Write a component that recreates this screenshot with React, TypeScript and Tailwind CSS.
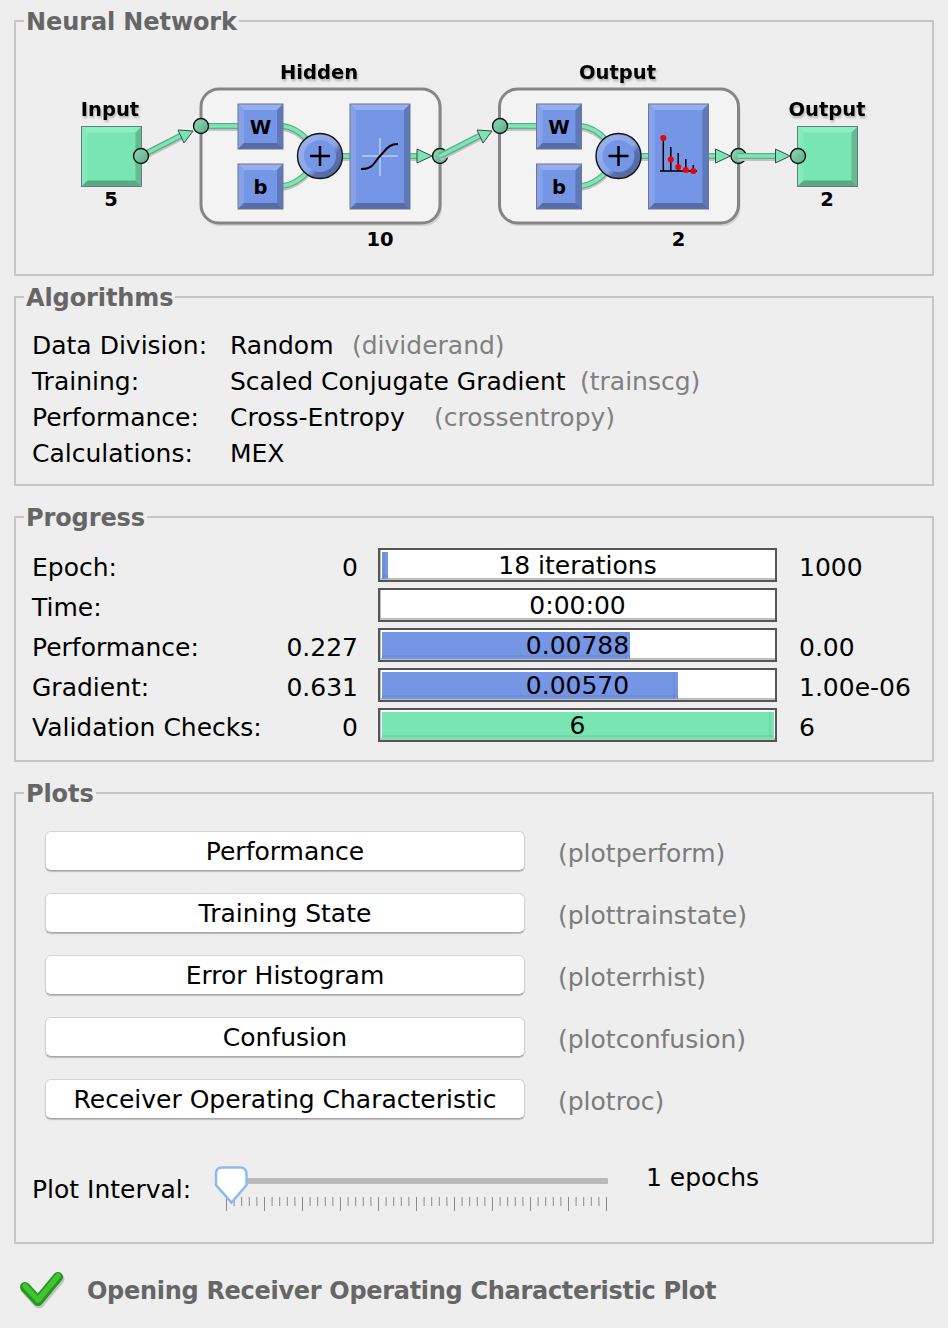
import type { ReactNode } from "react";

const BLUE = { main: "#7595e5", top: "#96aff0", left: "#86a2ea", right: "#5f78ba", bottom: "#566da9" };
const GREEN = { main: "#78e5b2", top: "#8aefc1", left: "#82ebb9", right: "#62bb91", bottom: "#5aa984" };

function Block({ x, y, w, h, bevel = 6, c = BLUE }: { x: number; y: number; w: number; h: number; bevel?: number; c?: typeof BLUE }) {
  const r = x + w;
  const b = y + h;
  const i = bevel;
  return (
    <g>
      <rect x={x} y={y} width={w} height={h} fill={c.main} />
      <polygon points={`${x},${y} ${r},${y} ${r - i},${y + i} ${x + i},${y + i}`} fill={c.top} />
      <polygon points={`${x},${y} ${x + i},${y + i} ${x + i},${b - i} ${x},${b}`} fill={c.left} />
      <polygon points={`${r},${y} ${r},${b} ${r - i},${b - i} ${r - i},${y + i}`} fill={c.right} />
      <polygon points={`${x},${b} ${r},${b} ${r - i},${b - i} ${x + i},${b - i}`} fill={c.bottom} />
      <rect x={x} y={y} width={w} height={h} fill="none" stroke="#6f7787" strokeWidth="1" />
    </g>
  );
}

function Wire({ d }: { d: string }) {
  return (
    <g fill="none">
      <path d={d} stroke="#c2c2c2" strokeWidth="6" transform="translate(0 2)" />
      <path d={d} stroke="#5fae8a" strokeWidth="6" />
      <path d={d} stroke="#7ce7b5" strokeWidth="3.5" />
    </g>
  );
}

function Ring({ x, y }: { x: number; y: number }) {
  return <circle cx={x} cy={y} r="7.5" fill="url(#ring)" stroke="#111" strokeWidth="1.4" />;
}

function Arrow({ points }: { points: string }) {
  return <polygon points={points} fill="#78e5b2" stroke="#3d4a44" strokeWidth="1" />;
}

function Label({ x, y, children, shadow = false }: { x: number; y: number; children: ReactNode; shadow?: boolean }) {
  return (
    <text
      x={x}
      y={y}
      textAnchor="middle"
      className={shadow ? "drop-shadow-[1px_2px_1px_#b0b0b0]" : ""}
      fontFamily="'DejaVu Sans', sans-serif"
      fontWeight="700"
      fontSize="19.5"
      fill="#000"
    >
      {children}
    </text>
  );
}

function Layer({ dx, title, size, children }: { dx: number; title: string; size: string; children: ReactNode }) {
  return (
    <g>
      <Label x={319 + dx} y={79} shadow>{title}</Label>
      <rect x={202 + dx} y={91} width={240} height={135} rx="18" fill="#bbb" opacity="0.55" />
      <rect x={201 + dx} y={89} width={239} height={134} rx="18" fill="#f3f3f3" stroke="#858585" strokeWidth="3" />
      <Wire d={`M${201 + dx} 126H${238 + dx}`} />
      <Wire d={`M${283 + dx} 126C${293 + dx} 127 ${300 + dx} 132 ${308 + dx} 140`} />
      <Wire d={`M${283 + dx} 186C${293 + dx} 185 ${300 + dx} 180 ${308 + dx} 172`} />
      <Wire d={`M${340 + dx} 156H${350 + dx}`} />
      <Wire d={`M${410 + dx} 156H${420 + dx}`} />
      <Block x={238 + dx} y={104} w={45} h={45} />
      <Block x={238 + dx} y={164} w={45} h={45} />
      <Label x={260.5 + dx} y={134}>W</Label>
      <Label x={260.5 + dx} y={194}>b</Label>
      <circle cx={320 + dx} cy={156} r="22.5" fill="url(#sum)" stroke="#111" strokeWidth="1.4" />
      <circle cx={320 + dx} cy={156} r="16" fill="#7595e5" />
      <path d={`M${310 + dx} 156H${330 + dx}M${320 + dx} 146V166`} stroke="#000" strokeWidth="2.5" />
      <Block x={350 + dx} y={104} w={60} h={105} />
      {children}
      <Arrow points={`${417 + dx},149 ${432 + dx},156 ${417 + dx},163`} />
      <Ring x={440 + dx} y={156} />
      <Label x={380 + dx} y={246}>{size}</Label>
    </g>
  );
}

function NetworkDiagram() {
  const stems = [
    [663.3, 138, 138],
    [670.8, 147, 159.5],
    [678.2, 153, 167],
    [685.8, 159, 170],
    [693.3, 165, 171],
  ];
  return (
    <svg viewBox="16 35 916 238" className="block h-[238px] w-[916px]">
      <defs>
        <linearGradient id="ring" x1="0" y1="0" x2="1" y2="1">
          <stop offset="0" stopColor="#8fdcb8" />
          <stop offset="1" stopColor="#5aa984" />
        </linearGradient>
        <linearGradient id="sum" x1="0" y1="0" x2="1" y2="1">
          <stop offset="0" stopColor="#9db4f0" />
          <stop offset="0.55" stopColor="#8aa4ea" />
          <stop offset="0.65" stopColor="#5a70ab" />
          <stop offset="1" stopColor="#4f659f" />
        </linearGradient>
      </defs>

      <Label x={110} y={116} shadow>Input</Label>
      <Block x={81.5} y={126.5} w={60} h={60} c={GREEN} />
      <Label x={111} y={206}>5</Label>
      <Wire d="M141 156L186 133" />
      <Arrow points="178,130 193,131 184,143" />
      <Ring x={141} y={156} />

      <Layer dx={0} title="Hidden" size="10">
        <path d="M380 138V176M362 156H398" stroke="#dfe6fa" strokeWidth="1" />
        <path d="M361 169C374 169 374 162 380 156C386 150 388 144 398 144" fill="none" stroke="#000" strokeWidth="2" />
      </Layer>
      <Ring x={201} y={126} />

      <Wire d="M440 156L485 133" />
      <Arrow points="477,130 492,131 483,143" />

      <Layer dx={298.5} title="Output" size="2">
        <path d="M660 171H697" stroke="#000" strokeWidth="1.5" />
        {stems.map(([x, t, d]) => (
          <g key={x}>
            <path d={`M${x} ${t}V171`} stroke="#000" strokeWidth="1.5" />
            <circle cx={x} cy={d} r="3" fill="#f00000" />
          </g>
        ))}
      </Layer>
      <Ring x={500} y={126} />

      <Label x={827} y={116} shadow>Output</Label>
      <Block x={797.5} y={126.5} w={60} h={60} c={GREEN} />
      <Label x={827} y={206}>2</Label>
      <Wire d="M738 156H776" />
      <Arrow points="775.5,149 790,156 775.5,163" />
      <Ring x={798} y={156} />
    </svg>
  );
}

function Panel({ title, className, children }: { title: string; className: string; children: ReactNode }) {
  return (
    <fieldset className={`border-2 border-[#c6c6c6] ${className}`}>
      <legend className="ml-[8px] translate-y-px px-[2px] text-[24px] leading-[28px] font-bold tracking-[-0.1px] text-[#666666]">{title}</legend>
      {children}
    </fieldset>
  );
}

const algorithms = [
  { label: "Data Division:", value: "Random", fn: "(dividerand)", width: "w-[122px]" },
  { label: "Training:", value: "Scaled Conjugate Gradient", fn: "(trainscg)", width: "w-[350px]" },
  { label: "Performance:", value: "Cross-Entropy", fn: "(crossentropy)", width: "w-[204px]" },
  { label: "Calculations:", value: "MEX", fn: "", width: "" },
];

const progress = [
  { label: "Epoch:", from: "0", text: "18 iterations", to: "1000", fill: "w-[6px]", color: "bg-[#7595e5]" },
  { label: "Time:", from: "", text: "0:00:00", to: "", fill: "w-0", color: "" },
  { label: "Performance:", from: "0.227", text: "0.00788", to: "0.00", fill: "w-[248px]", color: "bg-[#7595e5]" },
  { label: "Gradient:", from: "0.631", text: "0.00570", to: "1.00e-06", fill: "w-[296px]", color: "bg-[#7595e5]" },
  { label: "Validation Checks:", from: "0", text: "6", to: "6", fill: "w-[392px]", color: "bg-[#78e5b2]" },
];

const plots = [
  ["Performance", "(plotperform)"],
  ["Training State", "(plottrainstate)"],
  ["Error Histogram", "(ploterrhist)"],
  ["Confusion", "(plotconfusion)"],
  ["Receiver Operating Characteristic", "(plotroc)"],
];

function SliderTrack() {
  const ticks = Array.from({ length: 51 }, (_, i) => i);
  return (
    <svg viewBox="214 1163 396 50" className="h-[50px] w-[396px] shrink-0">
      <rect x="230" y="1178" width="378" height="6" rx="1" fill="#b9b9b9" />
      {ticks.map((i) => {
        const x = 226.5 + i * 7.6;
        return <path key={i} d={`M${x} 1197V${i % 5 === 0 ? 1211 : 1206}`} stroke="#8a8a8a" strokeWidth="1" />;
      })}
      <path
        d="M222 1167.5H240C244 1167.5 246.5 1170 246.5 1174V1185L231.5 1202.5L216 1185V1174C216 1170 218 1167.5 222 1167.5Z"
        fill="#fff"
        stroke="#8fbaee"
        strokeWidth="2.5"
      />
    </svg>
  );
}

function CheckMark() {
  return (
    <svg viewBox="0 0 48 42" className="h-[42px] w-[48px] shrink-0">
      <polyline points="6,19 19,33 39,9" fill="none" stroke="#8c8c8c" strokeOpacity="0.45" strokeWidth="11" strokeLinecap="round" strokeLinejoin="round" />
      <polyline points="5,17 18,31 38,7" fill="none" stroke="#1f9a1c" strokeWidth="10" strokeLinecap="round" strokeLinejoin="round" />
      <polyline points="5,16 18,30 38,6" fill="none" stroke="#45c234" strokeWidth="5.5" strokeLinecap="round" strokeLinejoin="round" />
    </svg>
  );
}

export default function App() {
  return (
    <div className="h-[1328px] w-[948px] overflow-hidden bg-[#eeeeee] pt-[7px] pl-[14px] font-['DejaVu_Sans',sans-serif] text-[25px] text-black">
      <Panel title="Neural Network" className="h-[269px] w-[920px]">
        <NetworkDiagram />
      </Panel>

      <Panel title="Algorithms" className="mt-[7px] h-[203px] w-[920px]">
        <div className="pt-[17px] pl-[16px]">
          {algorithms.map((row) => (
            <div key={row.label} className="flex h-[36px] items-center">
              <span className="w-[198px]">{row.label}</span>
              <span className={`whitespace-nowrap ${row.width}`}>{row.value}</span>
              <span className="text-[#808080]">{row.fn}</span>
            </div>
          ))}
        </div>
      </Panel>

      <Panel title="Progress" className="mt-[17px] h-[259px] w-[920px]">
        <div className="flex flex-col gap-[6px] pt-[17px] pl-[16px]">
          {progress.map((row) => (
            <div key={row.label} className="flex h-[34px] items-center">
              <span className="mt-[6px] w-[236px]">{row.label}</span>
              <span className="mt-[6px] w-[90px] text-right">{row.from}</span>
              <div className="relative ml-[20px] h-[34px] w-[399px] shrink-0 border-2 border-[#555555] bg-white">
                <div className="absolute inset-x-0 bottom-0 h-[2px] bg-[#bdbdbd]" />
                <div className="absolute inset-y-0 left-0 w-px bg-[#bdbdbd]" />
                <div className={`absolute top-[2px] bottom-[1px] left-[2px] overflow-hidden ${row.fill} ${row.color}`}>
                  <div className="absolute inset-x-0 bottom-[2px] h-[2px] bg-black/5" />
                  <div className="absolute inset-y-0 right-[3px] w-[2px] bg-black/5" />
                </div>
                <div className="absolute inset-0 flex items-center justify-center leading-none">{row.text}</div>
              </div>
              <span className="mt-[6px] ml-[22px]">{row.to}</span>
            </div>
          ))}
        </div>
      </Panel>

      <Panel title="Plots" className="mt-[17px] h-[465px] w-[920px]">
        <div className="flex flex-col gap-[22px] pt-[24px] pl-[29px]">
          {plots.map(([name, fn]) => (
            <div key={name} className="flex h-[40px] items-center">
              <button className="h-[40px] w-[480px] shrink-0 rounded-[6px] border border-[#d4d4d4] border-b-[#a8a8a8] bg-white pt-[1px] shadow-[0_1px_1px_#bbbbbb]">
                {name}
              </button>
              <span className="mt-[6px] ml-[33px] text-[#7c7c7c]">{fn}</span>
            </div>
          ))}
        </div>
        <div className="mt-[44px] flex items-start pl-[16px]">
          <span className="mt-[8px] w-[182px]">Plot Interval:</span>
          <SliderTrack />
          <span className="mt-[-4px] ml-[36px]">1 epochs</span>
        </div>
      </Panel>

      <div className="mt-[26px] flex h-[42px] items-center pl-[6px]">
        <CheckMark />
        <span className="ml-[19px] text-[24px] font-bold tracking-[-0.3px] text-[#666666]">Opening Receiver Operating Characteristic Plot</span>
      </div>
    </div>
  );
}
